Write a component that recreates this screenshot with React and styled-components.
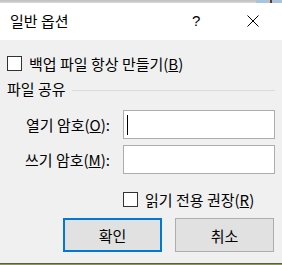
import React from "react";
import styled, { createGlobalStyle } from "styled-components";

const Global = createGlobalStyle`
  html, body {
    margin: 0;
    padding: 0;
    background: #f0f0f0;
  }
  body {
    font-family: "Noto Sans CJK KR", "Noto Sans", sans-serif;
    color: #000;
  }
`;

const Frame = styled.div`
  width: 282px;
  height: 265px;
  display: flex;
  flex-direction: column;
  overflow: hidden;
`;

const TopStrip = styled.div`
  height: 3px;
  display: flex;
`;

const StripPart = styled.div`
  width: ${(p) => (p.w ? `${p.w}px` : "auto")};
  flex: ${(p) => (p.w ? "none" : "1")};
  background: ${(p) => p.bg};
`;

const TitleBar = styled.div`
  height: 37px;
  background: #fff;
  display: flex;
  align-items: center;
  padding-left: 10px;
  padding-bottom: 2px;
  box-sizing: border-box;
`;

const Title = styled.div`
  font-size: 15px;
  flex: 1;
`;

const Help = styled.div`
  font-family: "Liberation Sans", sans-serif;
  font-size: 15px;
  width: 8px;
  margin-right: 47px;
`;

const Close = styled.svg`
  width: 12px;
  height: 12px;
  margin-right: 23px;
`;

const Body = styled.div`
  height: 223px;
  padding: 0 7px;
  display: flex;
  flex-direction: column;
  font-size: 15px;
`;

const CheckRow = styled.div`
  height: 20px;
  display: flex;
  align-items: center;
  gap: 7px;
  margin-top: ${(p) => p.top}px;
  padding-left: ${(p) => p.indent || 0}px;
`;

const Box = styled.span`
  width: 15px;
  height: 15px;
  box-sizing: border-box;
  border: 1px solid #333;
  background: #fff;
`;

const Section = styled.div`
  height: 20px;
  margin-top: 5px;
  display: flex;
  align-items: center;
  gap: 6px;
`;

const Rule = styled.div`
  flex: 1;
  height: 1px;
  background: #dcdcdc;
  margin-top: 4px;
`;

const Field = styled.div`
  display: flex;
  align-items: center;
  margin-top: ${(p) => p.top}px;
`;

const Label = styled.div`
  width: 103px;
  margin-right: 13px;
  text-align: right;
`;

const Input = styled.div`
  width: 152px;
  height: 29px;
  box-sizing: border-box;
  border: 1px solid #adadad;
  background: #fff;
  display: flex;
  align-items: center;
`;

const Caret = styled.span`
  width: 1px;
  height: 20px;
  background: #000;
  margin-left: 3px;
`;

const Buttons = styled.div`
  display: flex;
  gap: 13px;
  margin-top: 9px;
  padding-left: 56px;
`;

const Button = styled.div`
  width: 99px;
  height: 34px;
  box-sizing: border-box;
  background: #e1e1e1;
  border: ${(p) => (p.primary ? "2px solid #0078d7" : "1px solid #adadad")};
  display: flex;
  align-items: center;
  justify-content: center;
`;

const BottomStrip = styled.div`
  height: 2px;
  border-top: 1px solid #5b5f48;
  background: #8b9858;
  box-sizing: border-box;
`;

export default function App() {
  return (
    <Frame>
      <Global />
      <TopStrip>
        <StripPart bg="linear-gradient(#bdbdbd, #d9d9d9)" />
        <StripPart w={14} bg="#a9c4dc" />
        <StripPart w={2} bg="#6b3a1a" />
        <StripPart w={10} bg="#a9c4dc" />
      </TopStrip>
      <TitleBar>
        <Title>일반 옵션</Title>
        <Help>?</Help>
        <Close viewBox="0 0 12 12">
          <path d="M0.5 0.5 L11.5 11.5 M11.5 0.5 L0.5 11.5" stroke="#000" strokeWidth="1" />
        </Close>
      </TitleBar>
      <Body>
        <CheckRow top={13}>
          <Box />
          <span>
            백업 파일 항상 만들기(<u>B</u>)
          </span>
        </CheckRow>
        <Section>
          <span>파일 공유</span>
          <Rule />
        </Section>
        <Field top={12}>
          <Label>
            열기 암호(<u>O</u>):
          </Label>
          <Input>
            <Caret />
          </Input>
        </Field>
        <Field top={6}>
          <Label>
            쓰기 암호(<u>M</u>):
          </Label>
          <Input />
        </Field>
        <CheckRow top={15} indent={116}>
          <Box />
          <span>
            읽기 전용 권장(<u>R</u>)
          </span>
        </CheckRow>
        <Buttons>
          <Button primary>확인</Button>
          <Button>취소</Button>
        </Buttons>
      </Body>
      <BottomStrip />
    </Frame>
  );
}
